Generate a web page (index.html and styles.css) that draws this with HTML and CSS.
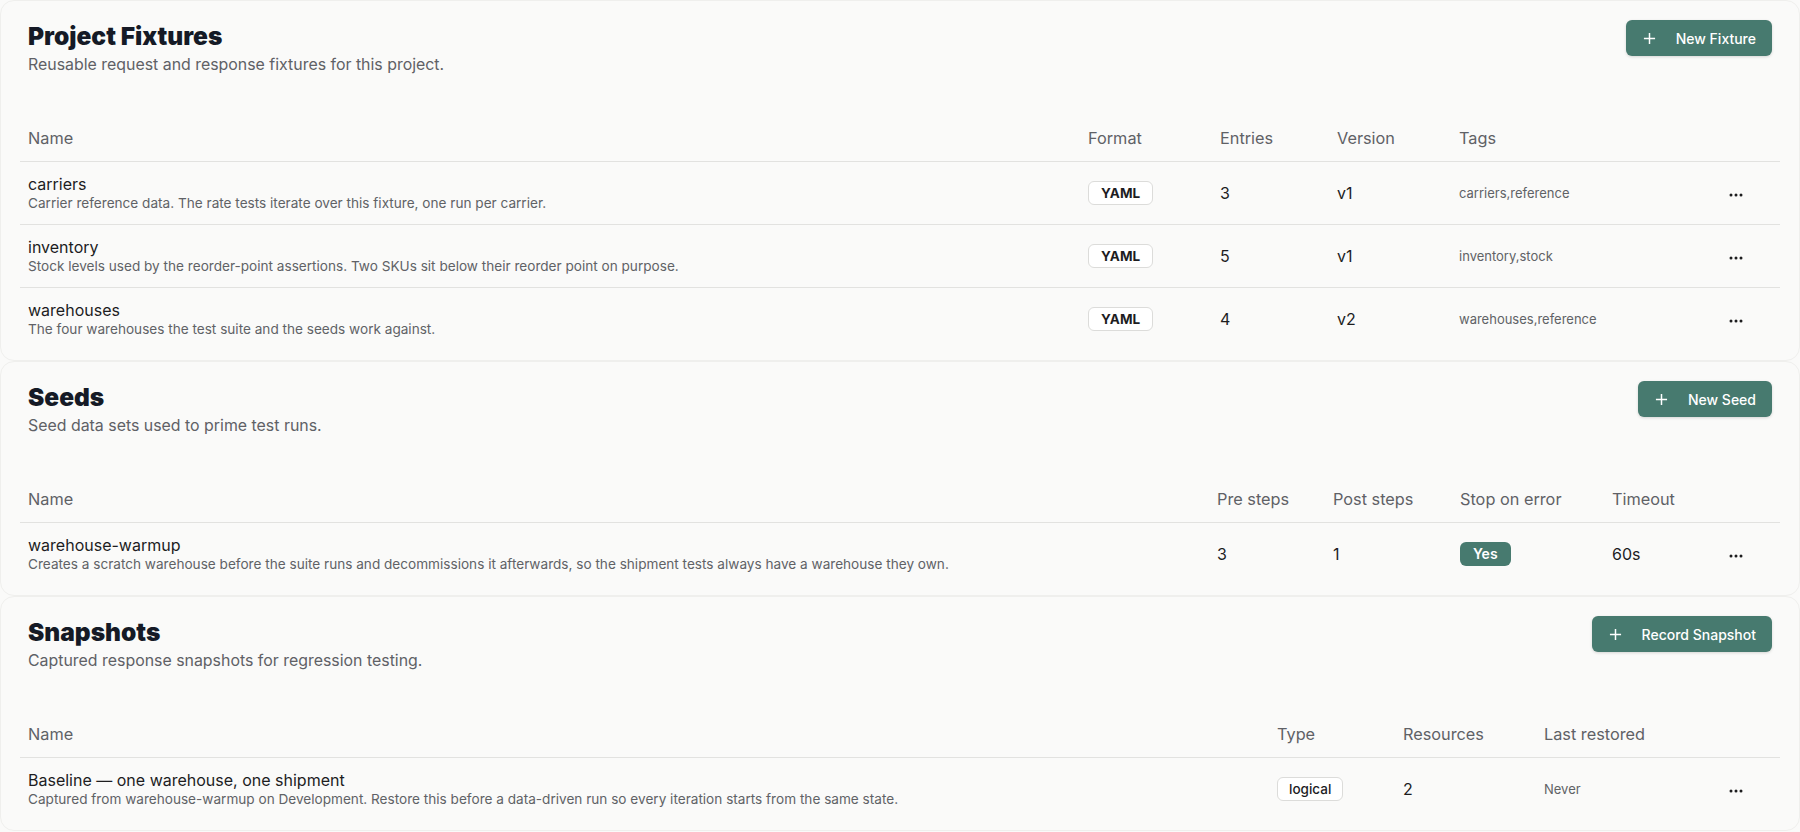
FILE: index.html
```html
<!DOCTYPE html>
<html lang="en">
<head>
<meta charset="utf-8">
<title>Project Fixtures</title>
<link rel="stylesheet" href="styles.css">
</head>
<body>
<main class="page">
  <section class="card">
    <header class="card-head">
      <div>
        <h1 class="title">Project Fixtures</h1>
        <p class="subtitle">Reusable request and response fixtures for this project.</p>
      </div>
      <button class="btn"><svg class="plus" viewBox="0 0 14 14"><path d="M7 1v12M1 7h12"/></svg><span>New Fixture</span></button>
    </header>
    <table class="tbl">
      <colgroup><col class="c-fx-name"><col class="c-fx-format"><col class="c-fx-entries"><col class="c-fx-version"><col class="c-fx-tags"><col class="c-act"></colgroup>
      <thead><tr><th>Name</th><th>Format</th><th>Entries</th><th>Version</th><th>Tags</th><th></th></tr></thead>
      <tbody>
        <tr>
          <td><div class="name">carriers</div><div class="desc">Carrier reference data. The rate tests iterate over this fixture, one run per carrier.</div></td>
          <td><span class="badge badge-bold">YAML</span></td>
          <td class="val">3</td><td class="val">v1</td>
          <td class="muted">carriers,reference</td>
          <td class="act"><svg class="dots" viewBox="0 0 14 4"><circle cx="2" cy="2" r="1.5"/><circle cx="7" cy="2" r="1.5"/><circle cx="12" cy="2" r="1.5"/></svg></td>
        </tr>
        <tr>
          <td><div class="name">inventory</div><div class="desc">Stock levels used by the reorder-point assertions. Two SKUs sit below their reorder point on purpose.</div></td>
          <td><span class="badge badge-bold">YAML</span></td>
          <td class="val">5</td><td class="val">v1</td>
          <td class="muted">inventory,stock</td>
          <td class="act"><svg class="dots" viewBox="0 0 14 4"><circle cx="2" cy="2" r="1.5"/><circle cx="7" cy="2" r="1.5"/><circle cx="12" cy="2" r="1.5"/></svg></td>
        </tr>
        <tr>
          <td><div class="name">warehouses</div><div class="desc">The four warehouses the test suite and the seeds work against.</div></td>
          <td><span class="badge badge-bold">YAML</span></td>
          <td class="val">4</td><td class="val">v2</td>
          <td class="muted">warehouses,reference</td>
          <td class="act"><svg class="dots" viewBox="0 0 14 4"><circle cx="2" cy="2" r="1.5"/><circle cx="7" cy="2" r="1.5"/><circle cx="12" cy="2" r="1.5"/></svg></td>
        </tr>
      </tbody>
    </table>
  </section>

  <section class="card">
    <header class="card-head">
      <div>
        <h2 class="title">Seeds</h2>
        <p class="subtitle">Seed data sets used to prime test runs.</p>
      </div>
      <button class="btn"><svg class="plus" viewBox="0 0 14 14"><path d="M7 1v12M1 7h12"/></svg><span>New Seed</span></button>
    </header>
    <table class="tbl">
      <colgroup><col class="c-sd-name"><col class="c-sd-pre"><col class="c-sd-post"><col class="c-sd-stop"><col class="c-sd-timeout"><col class="c-act"></colgroup>
      <thead><tr><th>Name</th><th>Pre steps</th><th>Post steps</th><th>Stop on error</th><th>Timeout</th><th></th></tr></thead>
      <tbody>
        <tr>
          <td><div class="name">warehouse-warmup</div><div class="desc">Creates a scratch warehouse before the suite runs and decommissions it afterwards, so the shipment tests always have a warehouse they own.</div></td>
          <td class="val">3</td><td class="val">1</td>
          <td><span class="pill">Yes</span></td>
          <td class="val">60s</td>
          <td class="act"><svg class="dots" viewBox="0 0 14 4"><circle cx="2" cy="2" r="1.5"/><circle cx="7" cy="2" r="1.5"/><circle cx="12" cy="2" r="1.5"/></svg></td>
        </tr>
      </tbody>
    </table>
  </section>

  <section class="card">
    <header class="card-head">
      <div>
        <h2 class="title">Snapshots</h2>
        <p class="subtitle">Captured response snapshots for regression testing.</p>
      </div>
      <button class="btn"><svg class="plus" viewBox="0 0 14 14"><path d="M7 1v12M1 7h12"/></svg><span>Record Snapshot</span></button>
    </header>
    <table class="tbl">
      <colgroup><col class="c-sn-name"><col class="c-sn-type"><col class="c-sn-res"><col class="c-sn-last"><col class="c-act"></colgroup>
      <thead><tr><th>Name</th><th>Type</th><th>Resources</th><th>Last restored</th><th></th></tr></thead>
      <tbody>
        <tr>
          <td><div class="name">Baseline — one warehouse, one shipment</div><div class="desc">Captured from warehouse-warmup on Development. Restore this before a data-driven run so every iteration starts from the same state.</div></td>
          <td><span class="badge">logical</span></td>
          <td class="val">2</td>
          <td class="muted">Never</td>
          <td class="act"><svg class="dots" viewBox="0 0 14 4"><circle cx="2" cy="2" r="1.5"/><circle cx="7" cy="2" r="1.5"/><circle cx="12" cy="2" r="1.5"/></svg></td>
        </tr>
      </tbody>
    </table>
  </section>
</main>
</body>
</html>
```

FILE: styles.css
```css
* { box-sizing: border-box; }
html, body { margin: 0; padding: 0; }
body {
  background: #fafaf9;
  font-family: Inter, "Noto Sans", "Liberation Sans", sans-serif;
  color: #1d1d1f;
}
.page { display: flex; flex-direction: column; }
.card {
  background: #fafaf9;
  border: 1px solid #efefed;
  border-radius: 14px;
  padding: 19px 19px 10px;
}
.card-head {
  display: flex;
  justify-content: space-between;
  align-items: flex-start;
  padding: 0 8px;
}
.title {
  margin: 0;
  font-size: 24.5px;
  line-height: 32px;
  font-weight: 900;
  color: #151a26;
  letter-spacing: 0;
}
.subtitle {
  margin: 2px 0 0;
  font-size: 15.9px;
  line-height: 22px;
  color: #5f6166;
}
.btn {
  display: flex;
  align-items: center;
  gap: 20px;
  height: 36px;
  padding: 0 16px 0 17px;
  border: none;
  border-radius: 6px;
  background: #477a6f;
  color: #fff;
  font-family: inherit;
  font-size: 14px;
  font-weight: 500;
  box-shadow: 0 1px 3px rgba(0,0,0,0.15);
}
.plus { width: 13px; height: 13px; fill: none; stroke: #fff; stroke-width: 1.6; }
.tbl {
  width: 100%;
  table-layout: fixed;
  border-collapse: collapse;
  margin-top: 40px;
}
.tbl th {
  text-align: left;
  font-weight: 400;
  font-size: 16.3px;
  line-height: 20px;
  color: #5f6166;
  padding: 12px 8px 13px;
  border-bottom: 1px solid #e2e2e0;
}
.tbl td {
  padding: 12px 8px;
  vertical-align: middle;
  border-bottom: 1px solid #e2e2e0;
}
.tbl tbody tr:last-child td { border-bottom: none; }
.name { font-size: 16px; line-height: 20px; color: #1d1d1f; }
.desc { font-size: 13.6px; line-height: 18px; color: #606266; }
.val { font-size: 16px; color: #1d1d1f; }
.muted { font-size: 13px; color: #606266; }
.badge {
  display: inline-block;
  padding: 3px 11px;
  border: 1px solid #dcdcda;
  border-radius: 6px;
  background: #fff;
  font-size: 13.5px;
  line-height: 16px;
  font-weight: 500;
  color: #1d1d1f;
}
.badge-bold { font-weight: 700; padding: 3px 12px; }
.pill {
  display: inline-block;
  padding: 3px 13px;
  border-radius: 6px;
  background: #477a6f;
  color: #fff;
  font-size: 14px;
  line-height: 18px;
  font-weight: 600;
}
.act { text-align: center; }
.dots { width: 14px; height: 4px; fill: #1d1d1f; display: inline-block; vertical-align: middle; }

.c-act { width: 88px; }
.c-fx-name { width: 1060px; }
.c-fx-format { width: 132px; }
.c-fx-entries { width: 117px; }
.c-fx-version { width: 122px; }
.c-fx-tags { width: 241px; }
.c-sd-name { width: 1189px; }
.c-sd-pre { width: 116px; }
.c-sd-post { width: 127px; }
.c-sd-stop { width: 152px; }
.c-sd-timeout { width: 88px; }
.c-sn-name { width: 1249px; }
.c-sn-type { width: 126px; }
.c-sn-res { width: 141px; }
.c-sn-last { width: 156px; }
```
